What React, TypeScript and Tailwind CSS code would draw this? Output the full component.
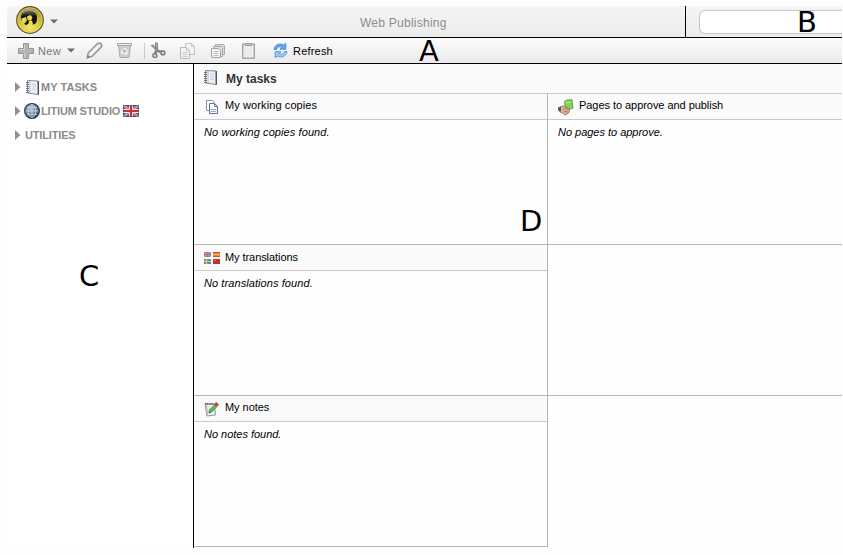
import type { ReactNode } from "react";

const Caret = ({ className }: { className?: string }) => (
  <svg width="8" height="5" viewBox="0 0 8 5" className={className}>
    <path d="M0 .5h8L4 4.500z" fill="#6b6b6b" />
  </svg>
);

const Logo = () => (
  <svg width="28" height="28" viewBox="0 0 28 28">
    <defs>
      <radialGradient id="gold" cx=".5" cy=".8" r=".75">
        <stop offset="0" stopColor="#f2e668" />
        <stop offset=".6" stopColor="#d0bf3c" />
        <stop offset="1" stopColor="#a3912a" />
      </radialGradient>
      <linearGradient id="gloss" x1="0" y1="0" x2="0" y2="1">
        <stop offset="0" stopColor="#8a8a80" />
        <stop offset=".45" stopColor="#111" />
      </linearGradient>
    </defs>
    <circle cx="14" cy="14" r="13.300" fill="url(#gold)" stroke="#63561b" strokeWidth="1.200" />
    <circle cx="14" cy="14" r="12.200" fill="none" stroke="#e9dc7a" strokeWidth=".7" />
    <path d="M5 12C5 6.500 8.500 3.500 13 3.500c5 0 8 3.500 8 8.500 0 3.500-1 6-3.500 6.500L5.500 15z" fill="url(#gloss)" />
    <path d="M5.500 12.500l4.500-1.500 1 4-3.500 2.500-2-2zM11 10.500l3.500-1.500 2 2.500-1.500 3-3.500-.5zM12.500 15l3.500-.5 1 3.500-3.500 1.500z" fill="#eedb4c" />
    <path d="M8 18l3-3 1.500 2.500-2 1.500z" fill="#1c1a08" />
    <path d="M7 7c3.500-4 9.500-4 13 0" stroke="#fff" strokeOpacity=".45" fill="none" />
  </svg>
);

const Plus = () => (
  <svg width="16" height="16" viewBox="0 0 16 16">
    <path d="M5.500.5h5v5h5v5h-5v5h-5v-5h-5v-5h5z" fill="#b4b4b4" stroke="#969696" />
    <path d="M6.500 1.500v5h-5M6.500 10v4.500" stroke="#d0d0d0" fill="none" />
  </svg>
);

const Pencil = () => (
  <svg width="17" height="17" viewBox="0 0 17 17">
    <path d="M1.200 15.800l1-5L11.500 1.500c1-1 2.500-.8 3.500.2s1.200 2.500.2 3.500L6 14.500z" fill="#e2e2e2" stroke="#8f8f8f" strokeWidth="1.300" />
    <path d="M4.500 12.200l8.500-8.500" stroke="#fff" strokeWidth="1.500" />
    <path d="M1 16l.8-3 2.200 2.200z" fill="#777" />
  </svg>
);

const Bin = () => (
  <svg width="15" height="17" viewBox="0 0 15 17">
    <path d="M1.500 3.500h12l-1.500 12H3z" fill="#cfcfcf" stroke="#aaa" />
    <path d="M.5 1.500h14v2H.5z" fill="#f0f0f0" stroke="#a5a5a5" />
    <circle cx="7.500" cy="9.500" r="2.600" fill="none" stroke="#f8f8f8" strokeWidth="1.500" strokeDasharray="4 1.400" />
    <path d="M6.500 9.500c0-1 1-1.500 2-1" stroke="#8f8f8f" fill="none" strokeWidth=".9" />
  </svg>
);

const Cut = () => (
  <svg width="16" height="17" viewBox="0 0 16 17">
    <path d="M1.200 3.500l2-.5 7 6.500-2 1zM5.500.5l2 .8v8.200l-2 .5z" fill="#a5a5a5" stroke="#7c7c7c" strokeWidth=".8" />
    <path d="M5.500 9v4M8.500 9.500h4" stroke="#777" strokeWidth="2.200" />
    <rect x="3" y="11.800" width="3.800" height="3.600" rx="1" fill="#d5d5d5" stroke="#7a7a7a" strokeWidth="1.400" />
    <rect x="11" y="9" width="3.800" height="3.800" rx="1" fill="#d5d5d5" stroke="#7a7a7a" strokeWidth="1.400" />
  </svg>
);

const Copy = () => (
  <svg width="15" height="16" viewBox="0 0 15 16">
    <path d="M5.500.5h6l3 3v8h-9z" fill="#f4f4f4" stroke="#c2c2c2" />
    <path d="M11.500.5v3h3" fill="none" stroke="#c2c2c2" />
    <path d="M.5 4.500h6l3 3v8H.5z" fill="#f4f4f4" stroke="#bababa" />
    <path d="M2.500 9.500h5M2.500 11.500h5M2.500 13.500h5M6.500 4.500v3h3" fill="none" stroke="#cacaca" />
  </svg>
);

const Versions = () => (
  <svg width="15" height="16" viewBox="0 0 15 16">
    <path d="M4.500 1.500h8l1 1v9h-9z" fill="#d8d8d8" stroke="#aaa" />
    <path d="M2.500 3.500h8l1 1v9h-9z" fill="#e0e0e0" stroke="#a8a8a8" />
    <path d="M.5 5.500h7l2 2v7H.5z" fill="#f3f3f3" stroke="#a2a2a2" />
    <path d="M2.500 8.500h5M2.500 10.500h5M2.500 12.500h5" stroke="#bdbdbd" />
  </svg>
);

const Clipboard = () => (
  <svg width="13" height="17" viewBox="0 0 13 17">
    <rect x=".7" y="2.200" width="11.600" height="14" fill="#ececec" stroke="#a0a0a0" strokeWidth="1.300" />
    <path d="M3.500 1.500h6v2h-6z" fill="#ccc" stroke="#999" />
  </svg>
);

const Refresh = () => (
  <svg width="15" height="15" viewBox="0 0 15 15">
    <path d="M1 6.500C1.500 2 6.500-.5 10.500 2L12.800.3v6H7l1.800-1.800C6.500 3 4.200 4 3.500 6.500z" fill="#62a9ee" stroke="#2e78c4" strokeWidth=".7" />
    <path d="M14 8.500c-.5 4.500-5.500 7-9.500 4.500l-2.300 1.700v-6H8l-1.800 1.800c2.300 1.500 4.600.5 5.300-2z" fill="#9ccdf7" stroke="#2e78c4" strokeWidth=".7" />
  </svg>
);

const Notebook = () => (
  <svg width="15" height="17" viewBox="0 0 15 17">
    <path d="M2.500 1.500l10.500.5.500 13.500-11-1.500z" fill="#eef1f5" stroke="#858c96" />
    <path d="M13.300 2v13.500" stroke="#4a525e" strokeWidth="1.400" />
    <path d="M5 2v12" stroke="#b5bdc9" />
    <path d="M7 5l4 .4M7 7.500l4 .4M7 10l4 .4" stroke="#c5cedb" />
    <path d="M1 3.500h3M1 5.500h3M1 7.500h3M1 9.500h3M1 11.500h3M1 13.500h3" stroke="#6e747c" />
  </svg>
);

const Globe = () => (
  <svg width="16" height="16" viewBox="0 0 16 16">
    <defs>
      <radialGradient id="sea" cx=".4" cy=".35" r=".65">
        <stop offset="0" stopColor="#aac6dc" />
        <stop offset=".65" stopColor="#6686a4" />
        <stop offset="1" stopColor="#2e4a64" />
      </radialGradient>
    </defs>
    <circle cx="8" cy="8" r="7.400" fill="url(#sea)" stroke="#2c3b4a" strokeWidth="1.200" />
    <path d="M8 1.500v13M1.500 8h13M3 4.500h10M3 11.500h10" stroke="#cfdfeb" strokeWidth=".7" />
    <ellipse cx="8" cy="8" rx="3.800" ry="6.500" fill="none" stroke="#cfdfeb" strokeWidth=".7" />
  </svg>
);

const UkFlag = () => (
  <svg width="16" height="12" viewBox="0 0 16 12">
    <path d="M0 0h16v12H0z" fill="#4b5b94" />
    <path d="M0 0l16 12M16 0L0 12" stroke="#dcc8d2" strokeWidth="2.200" />
    <path d="M0 0l16 12M16 0L0 12" stroke="#c8565e" strokeWidth="1" />
    <path d="M8 0v12M0 6h16" stroke="#f6e6e8" strokeWidth="4" />
    <path d="M8 0v12M0 6h16" stroke="#d22f32" strokeWidth="2.200" />
    <path d="M.5.500h15v11H.5z" fill="none" stroke="#33406c" strokeOpacity=".45" />
  </svg>
);

const WorkingCopies = () => (
  <svg width="13" height="14" viewBox="0 0 13 14" className="ml-0.5">
    <path d="M.5.500h6l2 2v8h-8z" fill="#fff" stroke="#8091b4" />
    <path d="M3.500 3.500h5l3 3v7h-8z" fill="#f8fafd" stroke="#5f749f" />
    <path d="M8.500 3.500v3h3" fill="none" stroke="#5f749f" />
    <path d="M5 9.500h5M5 11.500h5" stroke="#8fa4cb" />
  </svg>
);

const Approve = () => (
  <svg width="16" height="17" viewBox="0 0 16 17">
    <path d="M6.500 2.500L8.500 1l5.500-.3 1 8.500-7.500 2z" fill="#7fd35b" stroke="#4a9a3c" strokeWidth=".8" />
    <path d="M8 4l5-1" stroke="#b9f09c" />
    <path d="M1.500 8.500L4.500 7l4.500 1.500 2.500 2-.5 3-3.500 2.500-3-2-3-1.500z" fill="#dbb396" stroke="#86644e" strokeWidth=".8" />
    <path d="M0 8.500L3 7.500v5l-3-1z" fill="#5a5855" />
    <path d="M5 10.500l3-1 2 1.500M6 12.500l4 .5" stroke="#9b705a" fill="none" strokeWidth=".8" />
  </svg>
);

const Flags = () => (
  <svg width="16" height="12" viewBox="0 0 16 12">
    <path d="M0 0h7v5H0z" fill="#7886af" />
    <path d="M0 0l7 5M7 0L0 5" stroke="#cfc0cf" strokeWidth=".8" />
    <path d="M3.500 0v5M0 2.500h7" stroke="#cc6a70" strokeWidth="1.200" />
    <path d="M9 0h7v5H9z" fill="#c9503c" />
    <path d="M9 1.500h7v2H9z" fill="#f0c040" />
    <path d="M0 7h7v5H0z" fill="#5f8aa8" />
    <path d="M2.500 7v5M0 9.500h7" stroke="#e2d458" strokeWidth="1.200" />
    <path d="M9 7h7v5H9z" fill="#bd332a" />
    <path d="M10 8h2v1h-2z" fill="#dc7a3c" />
  </svg>
);

const Notes = () => (
  <svg width="15" height="15" viewBox="0 0 15 15">
    <path d="M1 2l9.500.3 1 10.700-8.500 1z" fill="#e8ecf6" stroke="#8990a4" strokeWidth=".9" />
    <path d="M1 1.800h9" stroke="#555" strokeWidth="1.600" strokeDasharray="1.200 .6" />
    <path d="M2.500 3l1 10.500" stroke="#dfa0a8" />
    <path d="M5.500 8L11 2.500l2 2L7.500 10 5 11z" fill="#6ac53e" stroke="#33812a" strokeWidth=".9" />
    <path d="M10.500 2l1.700-1.600 2.400 2.200L13 4z" fill="#d93c2c" stroke="#972920" strokeWidth=".6" />
  </svg>
);

const TreeItem = ({
  icon,
  label,
  tracking,
  children,
}: {
  icon?: ReactNode;
  label: string;
  tracking: string;
  children?: ReactNode;
}) => (
  <div className="flex h-6 items-center">
    <svg width="6" height="10" viewBox="0 0 6 10" className="mr-1 shrink-0">
      <path d="M0 0l5.500 5L0 10z" fill="#929292" />
    </svg>
    {icon}
    <span className={`whitespace-nowrap text-[11px] font-bold text-[#8b8b8b] ${tracking}`}>{label}</span>
    {children}
  </div>
);

type PanelProps = {
  icon: ReactNode;
  title: string;
  empty: string;
  titleClass: string;
  emptyClass: string;
};

const Panel = ({ icon, title, empty, titleClass, emptyClass }: PanelProps) => (
  <section className="h-[151px] border-b border-[#b5b5b5]">
    <h2 className="flex h-[26px] items-center border-b border-[#cacaca] bg-[#fafafa] pl-2.5">
      <span className="flex w-[21px] items-center pt-px">{icon}</span>
      <span className={`whitespace-nowrap text-[11px] ${titleClass}`}>{title}</span>
    </h2>
    <p className={`whitespace-nowrap pl-2.5 pt-[5px] text-[11px] italic leading-[14px] ${emptyClass}`}>{empty}</p>
  </section>
);

const Mark = ({ children, className }: { children: string; className: string }) => (
  <span className={`absolute font-['DejaVu_Sans',sans-serif] text-[29px] leading-none ${className}`}>{children}</span>
);

export default function App() {
  return (
    <div className="relative h-[555px] w-[843px] overflow-hidden bg-[#fefefe] pl-[7px] pt-1.5 font-['Liberation_Sans',Arial,sans-serif] text-black">
      <header className="flex h-8 w-[835px] border-b border-black bg-linear-to-b from-[#f5f5f5] to-[#ececec]">
        <div className="flex w-[679px] items-center border-r border-black">
          <div className="-mt-[3px] ml-[9px]"><Logo /></div>
          <Caret className="ml-1.5" />
          <span className="ml-[302px] mt-0.5 whitespace-nowrap text-xs tracking-[0.25px] text-[#8c8c8c]">Web Publishing</span>
        </div>
        <div className="ml-[13px] mt-1 h-6 flex-1 rounded-l-md border border-r-0 border-[#c5c5c5] bg-white" />
      </header>

      <nav className="flex h-[26px] w-[835px] items-center border-b border-black bg-linear-to-b from-[#fdfdfd] to-[#ebe9eb] pl-[11px] text-[11px]">
        <Plus />
        <span className="ml-1 mt-0.5 w-[26px] whitespace-nowrap tracking-[0.4px] text-[#777]">New</span>
        <Caret className="ml-[3px]" />
        <div className="ml-[11px]"><Pencil /></div>
        <div className="ml-3.5"><Bin /></div>
        <div className="ml-3 h-4 w-px bg-[#c8c8c8]" />
        <div className="ml-[5px]"><Cut /></div>
        <div className="ml-3.5"><Copy /></div>
        <div className="ml-4"><Versions /></div>
        <div className="ml-4"><Clipboard /></div>
        <div className="ml-[18px]"><Refresh /></div>
        <span className="ml-[5px] mt-0.5 whitespace-nowrap tracking-[0.2px]">Refresh</span>
      </nav>

      <div className="flex h-[484px] w-[835px]">
        <aside className="w-[187px] border-r border-black bg-white pl-2 pt-[11px]">
          <TreeItem icon={<span className="mr-px"><Notebook /></span>} label="MY TASKS" tracking="tracking-[0.05px]" />
          <TreeItem
            icon={<span className="-ml-px mr-px"><Globe /></span>}
            label="LITIUM STUDIO"
            tracking="tracking-[-0.16px]"
          >
            <span className="ml-[3px]"><UkFlag /></span>
          </TreeItem>
          <TreeItem label="UTILITIES" tracking="tracking-[-0.16px]" />
        </aside>
        <main className="flex-1">
          <h1 className="flex h-[30px] items-center border-b border-[#cacaca] bg-[#fafafa] pl-[9px]">
            <span className="-mt-0.5"><Notebook /></span>
            <span className="ml-2 text-xs font-bold text-[#333]">My tasks</span>
          </h1>
          <div className="flex">
            <div className="w-[354px] border-r border-[#b5b5b5]">
              <Panel
                icon={<WorkingCopies />}
                title="My working copies"
                empty="No working copies found."
                titleClass="-mt-0.5 tracking-[0.1px]"
                emptyClass="tracking-[0.09px]"
              />
              <Panel
                icon={<Flags />}
                title="My translations"
                empty="No translations found."
                titleClass="tracking-[-0.07px]"
                emptyClass="tracking-[0.08px]"
              />
              <Panel
                icon={<Notes />}
                title="My notes"
                empty="No notes found."
                titleClass="-mt-0.5 tracking-[-0.05px]"
                emptyClass="tracking-[-0.02px]"
              />
            </div>
            <div className="flex-1">
              <Panel
                icon={<Approve />}
                title="Pages to approve and publish"
                empty="No pages to approve."
                titleClass="-mt-0.5 tracking-[-0.05px]"
                emptyClass="tracking-[-0.02px]"
              />
              <div className="h-[151px] border-b border-[#b5b5b5]" />
            </div>
          </div>
        </main>
      </div>

      <Mark className="left-[419px] top-[37px]">A</Mark>
      <Mark className="left-[797px] top-[8px]">B</Mark>
      <Mark className="left-[79px] top-[262px]">C</Mark>
      <Mark className="left-[520px] top-[207px]">D</Mark>
    </div>
  );
}
